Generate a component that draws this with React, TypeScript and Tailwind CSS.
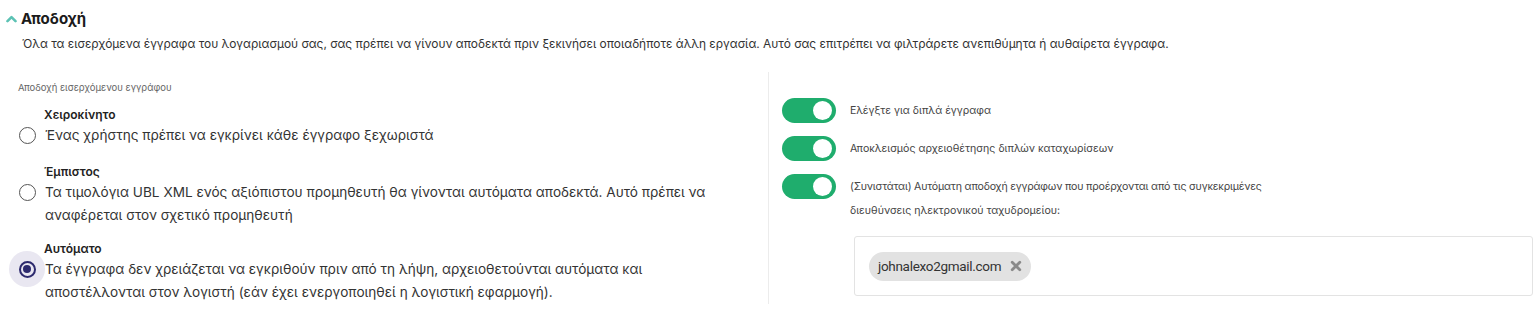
import React from "react";

const font = { fontFamily: "Inter, 'Noto Sans', sans-serif" };

function Radio({ checked }: { checked?: boolean }) {
  if (checked) {
    return (
      <div className="flex h-[36px] w-[36px] shrink-0 items-center justify-center rounded-full bg-[#e9e7f1]">
        <div className="flex h-[17px] w-[17px] items-center justify-center rounded-full border-2 border-[#2d2a6e]">
          <div className="h-[8px] w-[8px] rounded-full bg-[#2d2a6e]" />
        </div>
      </div>
    );
  }
  return (
    <div className="flex h-[36px] w-[36px] shrink-0 items-center justify-center">
      <div className="h-[17px] w-[17px] rounded-full border border-[#555]" />
    </div>
  );
}

function Toggle() {
  return (
    <div className="flex h-[25px] w-[54px] shrink-0 items-center justify-end rounded-full bg-[#1fad6d] pr-[4px]">
      <div className="h-[19px] w-[19px] rounded-full bg-white" />
    </div>
  );
}

function Option({
  title,
  lines,
  checked,
}: {
  title: string;
  lines: string[];
  checked?: boolean;
}) {
  return (
    <div className="flex flex-col">
      <div className="pl-[44px] text-[12px] font-semibold leading-[19px] text-[#222]">{title}</div>
      <div className="flex items-start">
        <div className="mb-[-3px] ml-[9px] mt-[-7px]">
          <Radio checked={checked} />
        </div>
        <div className="text-[13.6px] leading-[23px] text-[#333]">
          {lines.map((l, i) => (
            <div key={i}>{l}</div>
          ))}
        </div>
      </div>
    </div>
  );
}

export default function App() {
  return (
    <div className="h-[331px] w-[1539px] overflow-hidden bg-white" style={font}>
      <div className="flex items-center gap-[4px] pl-[6px] pt-[9px]">
        <svg width="11" height="8" viewBox="0 0 11 8">
          <path d="M1.5 6.2 L5.5 2.2 L9.5 6.2" stroke="#5cc2b4" strokeWidth="2.6" fill="none" strokeLinecap="round" strokeLinejoin="round" />
        </svg>
        <div className="text-[15px] font-bold leading-[20px] text-[#1b1b1b]">Αποδοχή</div>
      </div>
      <div className="mt-[6px] pl-[22px] text-[11.93px] leading-[18px] text-[#333]">
        Όλα τα εισερχόμενα έγγραφα του λογαριασμού σας, σας πρέπει να γίνουν αποδεκτά πριν ξεκινήσει οποιαδήποτε άλλη εργασία. Αυτό σας επιτρέπει να φιλτράρετε ανεπιθύμητα ή αυθαίρετα έγγραφα.
      </div>
      <div className="mt-[19px] flex">
        <div className="w-[769px] shrink-0 border-r border-[#ececec] pt-[10px]">
          <div className="pl-[18px] text-[9.5px] leading-[12px] text-[#666]">Αποδοχή εισερχόμενου εγγράφου</div>
          <div className="mt-[11px] flex flex-col gap-[12px]">
            <Option title="Χειροκίνητο" lines={["Ένας χρήστης πρέπει να εγκρίνει κάθε έγγραφο ξεχωριστά"]} />
            <Option
              title="Έμπιστος"
              lines={[
                "Τα τιμολόγια UBL XML ενός αξιόπιστου προμηθευτή θα γίνονται αυτόματα αποδεκτά. Αυτό πρέπει να",
                "αναφέρεται στον σχετικό προμηθευτή",
              ]}
            />
            <Option
              checked
              title="Αυτόματο"
              lines={[
                "Τα έγγραφα δεν χρειάζεται να εγκριθούν πριν από τη λήψη, αρχειοθετούνται αυτόματα και",
                "αποστέλλονται στον λογιστή (εάν έχει ενεργοποιηθεί η λογιστική εφαρμογή).",
              ]}
            />
          </div>
        </div>
        <div className="flex-1 pl-[13px] pt-[26px]">
          <div className="flex flex-col gap-[13px]">
            <div className="flex items-center gap-[14px]">
              <Toggle />
              <div className="text-[10.6px] text-[#444]">Ελέγξτε για διπλά έγγραφα</div>
            </div>
            <div className="flex items-center gap-[14px]">
              <Toggle />
              <div className="text-[10.6px] text-[#444]">Αποκλεισμός αρχειοθέτησης διπλών καταχωρίσεων</div>
            </div>
            <div className="flex items-start gap-[14px]">
              <Toggle />
              <div className="pt-[3px] text-[10.6px] leading-[25px] text-[#444]">
                <div className="leading-[19px] tracking-[-0.2px]">(Συνιστάται) Αυτόματη αποδοχή εγγράφων που προέρχονται από τις συγκεκριμένες</div>
                <div className="leading-[30px]">διευθύνσεις ηλεκτρονικού ταχυδρομείου:</div>
              </div>
            </div>
          </div>
          <div className="ml-[72px] mr-[6px] mt-[10px] flex h-[60px] items-center rounded-[3px] border border-[#e3e3e3] px-[14px]">
            <div className="flex h-[29px] items-center gap-[9px] rounded-full bg-[#e2e2e2] pl-[9px] pr-[9px]">
              <span className="text-[13.5px] text-[#333]" style={{ fontFamily: "Roboto, sans-serif", letterSpacing: "-0.3px" }}>
                johnalexo2gmail.com
              </span>
              <svg width="12" height="12" viewBox="0 0 12 12">
                <path d="M2.2 2.2 L9.8 9.8 M9.8 2.2 L2.2 9.8" stroke="#8a8a8a" strokeWidth="2.8" strokeLinecap="round" />
              </svg>
            </div>
          </div>
        </div>
      </div>
    </div>
  );
}
